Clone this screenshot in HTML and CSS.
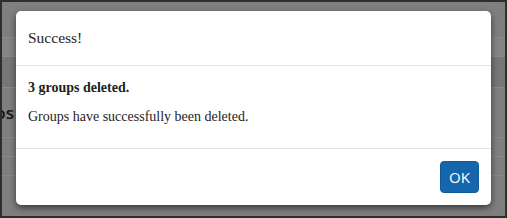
FILE: index.html
```html
<!DOCTYPE html>
<html lang="en">
<head>
    <meta charset="UTF-8">
    <meta name="viewport" content="width=device-width, initial-scale=1.0">
    <title>Groups</title>
    <link rel="stylesheet" href="styles.css">
</head>
<body>

    <div class="screen">
        <div class="page">
            <div class="row"></div>
            <div class="row head"></div>
            <div class="row band"></div>
            <div class="row title"><h2>Photos</h2></div>
            <div class="row"></div>
            <div class="row"></div>
        </div>

        <div class="modal">
            <div class="modal-header">Success!</div>
            <div class="modal-body">
                <p class="strong">3 groups deleted.</p>
                <p>Groups have successfully been deleted.</p>
            </div>
            <div class="modal-footer">
                <button class="btn">OK</button>
            </div>
        </div>
    </div>

</body>
</html>
```

FILE: styles.css
```css
body {
    margin: 0;
    background-color: #2e2e2e;
}
.screen {
    position: relative;
    width: 507px;
    height: 218px;
    box-sizing: border-box;
    border: 2px solid #2e2e2e;
    background-color: #7f7f7f;
    overflow: hidden;
}
.page {
    display: flex;
    flex-direction: column;
}
.row {
    border-bottom: 1px solid #8a8a8a;
    height: 18px;
}
.row:first-child {
    height: 35px;
}
.row.head {
    background-color: #858585;
}
.row.band {
    height: 30px;
    background-color: #777;
}
.row.title {
    height: 49px;
    display: flex;
    align-items: center;
}
.row.title h2 {
    margin: 0 0 0 -45px;
    font-family: "Open Sans", sans-serif;
    font-size: 17px;
    font-weight: 600;
    color: #141414;
}
.modal {
    position: absolute;
    left: 14px;
    top: 9px;
    width: 475px;
    background-color: #fff;
    border-radius: 5px;
    box-shadow: 0 3px 7px rgba(0, 0, 0, 0.55);
    font-family: "Liberation Serif", serif;
    color: #1e1e1e;
}
.modal-header {
    height: 54px;
    display: flex;
    align-items: center;
    padding: 0 12px;
    border-bottom: 1px solid #e5e5e5;
    font-size: 15.5px;
}
.modal-body {
    padding: 12px;
    font-size: 14px;
    border-bottom: 1px solid #e5e5e5;
}
.modal-body p {
    margin: 0 0 9px;
    line-height: 20px;
}
.strong {
    font-weight: bold;
}
.modal-footer {
    display: flex;
    justify-content: flex-end;
    padding: 12px;
}
.btn {
    height: 32px;
    width: 39px;
    padding: 0;
    border: 1px solid #0f5a99;
    border-radius: 4px;
    background-color: #1467ad;
    color: #fff;
    font-family: "Open Sans", sans-serif;
    font-size: 15px;
    cursor: pointer;
}
```
